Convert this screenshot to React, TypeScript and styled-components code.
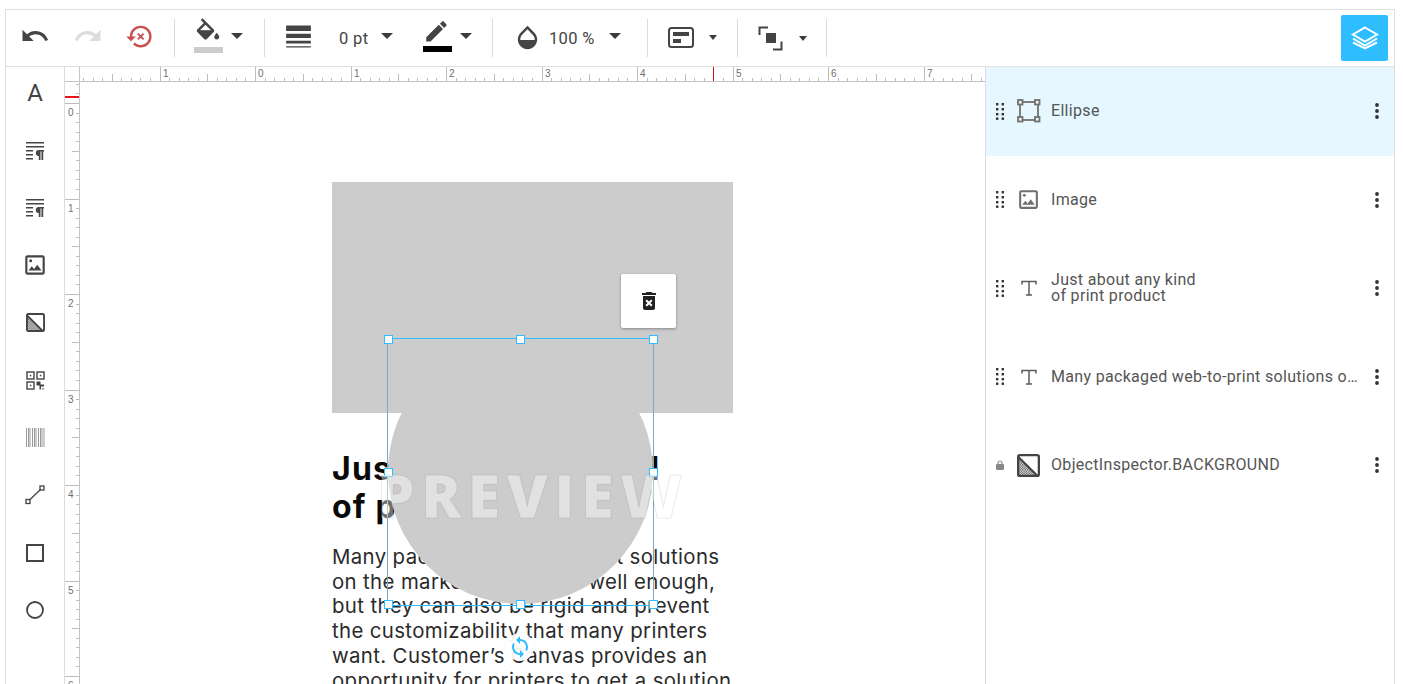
import React from 'react';
import styled, { createGlobalStyle } from 'styled-components';

const GlobalStyle = createGlobalStyle`
  html, body {
    margin: 0;
    height: 100%;
    overflow: hidden;
    background: #fff;
    font-family: Roboto, "Liberation Sans", sans-serif;
  }
`;

const Frame = styled.div`
  box-sizing: border-box;
  height: calc(100vh - 9px);
  margin: 9px 8px 0 5px;
  border: 1px solid #e0e0e0;
  border-bottom: 0;
  overflow: hidden;
  display: flex;
  flex-direction: column;
`;

const Toolbar = styled.div`
  flex: none;
  height: 56px;
  border-bottom: 1px solid #e0e0e0;
  display: flex;
  align-items: center;
`;

const Group = styled.div<{ $w: number; $pad?: number }>`
  box-sizing: border-box;
  width: ${(p) => p.$w}px;
  height: 38px;
  padding-left: ${(p) => p.$pad ?? 0}px;
  border-right: 1px solid #dcdcdc;
  display: flex;
  align-items: center;
`;

const Slot = styled.button<{ $w: number; $lift?: number; $left?: number }>`
  flex: none;
  width: ${(p) => p.$w}px;
  height: 38px;
  margin: 0 0 0 ${(p) => p.$left ?? 0}px;
  padding: 0 0 ${(p) => p.$lift ?? 0}px;
  border: 0;
  background: none;
  display: flex;
  flex-direction: column;
  align-items: center;
  justify-content: center;
`;

const Swatch = styled.span<{ $color: string }>`
  flex: none;
  width: 29px;
  height: 6px;
  margin-top: 1px;
  background: ${(p) => p.$color};
`;

const Caret = styled.span<{ $small?: boolean }>`
  width: 0;
  height: 0;
  border-left: ${(p) => (p.$small ? 4.5 : 6)}px solid transparent;
  border-right: ${(p) => (p.$small ? 4.5 : 6)}px solid transparent;
  border-top: ${(p) => (p.$small ? 5 : 6)}px solid #3c3c3c;
`;

const Value = styled.span<{ $w: number; $left: number }>`
  flex: none;
  width: ${(p) => p.$w}px;
  margin-left: ${(p) => p.$left}px;
  color: #444;
  font-size: 16.5px;
  letter-spacing: 0.35px;
  white-space: nowrap;
`;

const LayersButton = styled.button`
  flex: none;
  width: 47px;
  height: 46px;
  margin: 0 6px 0 auto;
  padding: 0;
  border: 0;
  border-radius: 2px;
  background: #2ebdff;
  display: flex;
  align-items: center;
  justify-content: center;
`;

const Workspace = styled.div`
  flex: 1;
  min-height: 0;
  display: grid;
  grid-template-columns: 59px 15px 1fr 409px;
`;

const Tools = styled.div`
  border-right: 1px solid #dcdcdc;
  display: flex;
  flex-direction: column;
  gap: 5.45px;
`;

const Tool = styled.button`
  flex: none;
  height: 52px;
  margin: 0;
  padding: 0;
  border: 0;
  background: none;
  display: flex;
  align-items: center;
  justify-content: center;
  color: #444;
  font-family: Roboto, sans-serif;
  font-size: 24px;
  font-weight: 400;
`;

const RulerColumn = styled.div`
  display: grid;
  grid-template-rows: 15px 1fr;
  min-height: 0;
`;

const Corner = styled.div`
  border-right: 1px solid #c4c4c4;
  border-bottom: 1px solid #c4c4c4;
`;

const VerticalRulerBox = styled.div`
  border-right: 1px solid #c4c4c4;
  overflow: hidden;
  position: relative;
`;

const CanvasColumn = styled.div`
  display: grid;
  grid-template-rows: 15px 1fr;
  min-width: 0;
  min-height: 0;
`;

const HorizontalRulerBox = styled.div`
  border-bottom: 1px solid #c4c4c4;
  overflow: hidden;
`;

const RulerSvg = styled.svg`
  display: block;
  shape-rendering: crispEdges;
`;

const Canvas = styled.div`
  position: relative;
  overflow: hidden;
  background: #fff;
`;

const Placeholder = styled.div`
  position: absolute;
  left: 252px;
  top: 100px;
  width: 401px;
  height: 231px;
  background: #ccc;
`;

const TextBlock = styled.div`
  position: absolute;
  left: 252px;
  top: 368px;
  white-space: pre;
  font-family: Inter, "Open Sans", sans-serif;
`;

const Title = styled.div`
  color: #0a0a0a;
  font-size: 32px;
  font-weight: 700;
  line-height: 38px;
  letter-spacing: 1.2px;
`;

const Body = styled.div`
  margin-top: 19px;
  color: #2b2b2b;
  font-size: 20.4px;
  font-weight: 400;
  line-height: 24.7px;
  letter-spacing: 0.36px;
`;

const Selection = styled.div`
  position: absolute;
  left: 307px;
  top: 256px;
  box-sizing: border-box;
  width: 267px;
  height: 268px;
  border: 1px solid #2ebdff;
  border-left-color: #7fa9bd;
  border-right-color: #7fa9bd;
`;

const Ellipse = styled.div`
  width: 265px;
  height: 265px;
  border-radius: 50%;
  background: #ccc;
`;

const Handle = styled.span<{ $x: number; $y: number }>`
  position: absolute;
  left: ${(p) => p.$x - 4}px;
  top: ${(p) => p.$y - 4}px;
  box-sizing: border-box;
  width: 9px;
  height: 9px;
  border: 1px solid #2ebdff;
  background: #fff;
`;

const Watermark = styled.div`
  position: absolute;
  left: 297px;
  top: 378px;
  color: rgba(255, 255, 255, 0.42);
  font-family: "Open Sans", sans-serif;
  font-size: 60px;
  font-weight: 800;
  line-height: 70px;
  letter-spacing: 6px;
  -webkit-text-stroke: 1px rgba(0, 0, 0, 0.09);
  white-space: nowrap;
`;

const DeleteButton = styled.button`
  position: absolute;
  left: 541px;
  top: 192px;
  width: 55px;
  height: 54px;
  padding: 0;
  border: 0;
  border-radius: 2px;
  background: #fff;
  box-shadow: 0 1px 3px rgba(0, 0, 0, 0.35);
  display: flex;
  align-items: center;
  justify-content: center;
`;

const RotateHandle = styled.div`
  position: absolute;
  left: 426px;
  top: 551px;
  width: 28px;
  height: 28px;
  border-radius: 50%;
  background: rgba(255, 255, 255, 0.92);
  box-shadow: 0 0 3px rgba(0, 0, 0, 0.08);
  display: flex;
  align-items: center;
  justify-content: center;
`;

const Inspector = styled.div`
  border-left: 1px solid #dcdcdc;
  display: flex;
  flex-direction: column;
`;

const LayerRow = styled.div<{ $active?: boolean }>`
  flex: none;
  height: 88.5px;
  box-sizing: border-box;
  background: ${(p) => (p.$active ? '#e6f7ff' : '#fff')};
  display: flex;
  align-items: center;
`;

const DragCell = styled.span`
  flex: none;
  width: 27px;
  display: flex;
  justify-content: center;
`;

const IconCell = styled.span`
  flex: none;
  width: 31px;
  margin-right: 7px;
  display: flex;
  justify-content: center;
`;

const LayerName = styled.span`
  flex: none;
  width: 308px;
  margin-right: 2px;
  color: #555;
  font-size: 16px;
  line-height: 16px;
  letter-spacing: 0.32px;
  white-space: pre;
  overflow: hidden;
  text-overflow: ellipsis;
`;

const MoreCell = styled.span`
  flex: none;
  width: 24px;
  margin-left: 4px;
  display: flex;
  justify-content: center;
`;

const STEP = 9.55;

const Ruler = ({ vertical, length, origin, marker }: { vertical?: boolean; length: number; origin: number; marker?: number }) => {
  const ticks: React.ReactNode[] = [];
  const labels: React.ReactNode[] = [];
  for (let i = -40; i * STEP + origin < length; i++) {
    const pos = Math.round(i * STEP + origin);
    if (pos < 0) continue;
    const major = i % 10 === 0;
    const size = major ? 14 : i % 5 === 0 ? 7 : 3;
    ticks.push(
      vertical ? (
        <line key={i} x1={14 - size} x2={14} y1={pos} y2={pos} stroke="#bdbdbd" />
      ) : (
        <line key={i} x1={pos} x2={pos} y1={14 - size} y2={14} stroke="#bdbdbd" />
      ),
    );
    if (major) {
      const text = String(Math.abs(i / 10));
      labels.push(
        <text
          key={i}
          x={vertical ? 3 : pos + 3}
          y={vertical ? pos + 13 : 10}
          fill="#707070"
          fontSize="10"
          fontFamily="Liberation Sans, sans-serif"
          style={{ shapeRendering: 'auto' }}
        >
          {text}
        </text>,
      );
    }
  }
  return (
    <RulerSvg width={vertical ? 14 : length} height={vertical ? length : 14}>
      {ticks}
      {labels}
      {marker !== undefined &&
        (vertical ? (
          <rect x={0} y={marker} width={14} height={2} fill="#e8141c" />
        ) : (
          <rect x={marker} y={0} width={1} height={14} fill="#d0101c" />
        ))}
    </RulerSvg>
  );
};

const Icon = ({ size = 24, box = '0 0 24 24', color = '#444', d }: { size?: number; box?: string; color?: string; d: string }) => (
  <svg width={size} height={size} viewBox={box} fill={color}>
    <path d={d} />
  </svg>
);

const UNDO = 'M12.5 8c-2.65 0-5.05.99-6.9 2.6L2 7v9h9l-3.62-3.62c1.39-1.16 3.16-1.88 5.12-1.88 3.54 0 6.55 2.31 7.6 5.5l2.37-.78C21.08 11.03 17.15 8 12.5 8z';
const REDO = 'M18.4 10.6C16.55 8.99 14.15 8 11.5 8c-4.65 0-8.58 3.03-9.96 7.22L3.9 16c1.05-3.19 4.05-5.5 7.6-5.5 1.95 0 3.73.72 5.12 1.88L13 16h9V7l-3.6 3.6z';
const RESTORE = 'M13 3a9 9 0 0 0-9 9H1l3.89 3.89.07.14L9 12H6c0-3.87 3.13-7 7-7s7 3.13 7 7-3.13 7-7 7c-1.93 0-3.68-.79-4.94-2.06l-1.42 1.42A8.954 8.954 0 0 0 13 21a9 9 0 0 0 0-18z';
const LINE_WEIGHT = 'M3 17h18v-2H3v2zm0 3h18v-1H3v1zm0-7h18v-3H3v3zm0-9v4h18V4H3z';
const OPACITY = 'M17.66 8L12 2.35 6.34 8C4.78 9.56 4 11.64 4 13.64s.78 4.11 2.34 5.67 3.61 2.35 5.66 2.35 4.1-.79 5.66-2.35S20 15.64 20 13.64 19.22 9.56 17.66 8zM6 14c.01-2 .62-3.27 1.76-4.4L12 5.27l4.24 4.38C17.38 10.77 17.99 12 18 14H6z';
const PENCIL = 'M3 17.25V21h3.75L17.81 9.94l-3.75-3.75L3 17.25zM20.71 7.04c.39-.39.39-1.02 0-1.41l-2.34-2.34c-.39-.39-1.02-.39-1.41 0l-1.83 1.83 3.75 3.75 1.83-1.83z';
const TRASH = 'M6 19c0 1.1.9 2 2 2h8c1.1 0 2-.9 2-2V7H6v12zm2.46-7.12l1.41-1.41L12 12.59l2.12-2.12 1.41 1.41L13.41 14l2.12 2.12-1.41 1.41L12 15.41l-2.12 2.12-1.41-1.41L10.59 14l-2.13-2.12zM15.5 4l-1-1h-5l-1 1H5v2h14V4z';
const SYNC = 'M12 4V1L8 5l4 4V6c3.31 0 6 2.69 6 6 0 1.01-.25 1.97-.7 2.8l1.46 1.46C19.54 15.03 20 13.57 20 12c0-4.42-3.58-8-8-8zm0 14c-3.31 0-6-2.69-6-6 0-1.01.25-1.97.7-2.8L5.24 7.74C4.46 8.97 4 10.43 4 12c0 4.42 3.58 8 8 8v3l4-4-4-4v3z';
const IMAGE = 'M19 5v14H5V5h14m0-2H5c-1.1 0-2 .9-2 2v14c0 1.1.9 2 2 2h14c1.1 0 2-.9 2-2V5c0-1.1-.9-2-2-2zm-4.86 8.86l-3 3.87L9 13.14 6 17h12l-3.86-5.14z';

const RestoreIcon = () => (
  <svg width="29" height="29" viewBox="0 0 24 24" fill="#c94f4f">
    <path d={RESTORE} />
    <path d="M10.6 9.6l4.8 4.8M15.4 9.6l-4.8 4.8" stroke="#c94f4f" strokeWidth="1.5" fill="none" />
  </svg>
);

const FillIcon = () => (
  <svg width="30" height="28" viewBox="0 0 24 22" fill="#444" style={{ flex: 'none' }}>
    <path d="M16.56 8.94L7.62 0 6.21 1.41l2.38 2.38-5.15 5.15c-.59.59-.59 1.54 0 2.12l5.5 5.5c.29.29.68.44 1.06.44s.77-.15 1.06-.44l5.5-5.5c.59-.58.59-1.53 0-2.12zM5.21 10L10 5.21 14.79 10H5.21z" />
    <path d="M4.5 9.5h11v1.5l-5.5 5.5L4.5 11z" />
    <path d="M19 11.5s-2 2.17-2 3.5c0 1.1.9 2 2 2s2-.9 2-2c0-1.33-2-3.5-2-3.5z" />
  </svg>
);

const TextBoxIcon = () => (
  <svg width="26" height="21" viewBox="0 0 26 21">
    <rect x="1" y="1" width="24" height="19" rx="2.5" fill="none" stroke="#444" strokeWidth="2" />
    <rect x="5" y="5" width="16" height="4" fill="#444" />
    <rect x="5" y="12" width="8" height="4" fill="#444" />
  </svg>
);

const ArrangeIcon = () => (
  <svg width="25" height="25" viewBox="0 0 25 25">
    <path d="M1.5 9V1.5H10M23.5 15.5V23.5H15" fill="none" stroke="#444" strokeWidth="2" />
    <rect x="8" y="7" width="10" height="10" fill="#444" />
  </svg>
);

const LayersIcon = () => (
  <svg width="28" height="24" viewBox="0 0 28 24" fill="none" stroke="#fff" strokeWidth="2">
    <path d="M14 1.5L26 8.5L14 15.5L2 8.5Z" />
    <path d="M2 12.5L14 19.5L26 12.5" />
    <path d="M2 16.5L14 22.5L26 16.5" />
  </svg>
);

const ParagraphIcon = () => (
  <svg width="19" height="19" viewBox="0 0 19 19" fill="#444">
    <rect x="0" y="1" width="18" height="1.5" />
    <rect x="0" y="5" width="18" height="1.5" />
    <rect x="0" y="9" width="7" height="1.5" />
    <rect x="0" y="13" width="7" height="1.5" />
    <rect x="0" y="17" width="7" height="1.5" />
    <path d="M18 9v1.5h-.8V19h-1.700V10.500h-1V19h-1.700V15a3 3 0 0 1 0-6z" />
  </svg>
);

const BackgroundIcon = ({ id, size }: { id: string; size: number }) => (
  <svg width={size} height={size} viewBox="0 0 20 20">
    <defs>
      <pattern id={id} width="2.2" height="2.2" patternUnits="userSpaceOnUse">
        <rect width="1.1" height="1.1" fill="#444" />
        <rect x="1.1" y="1.1" width="1.1" height="1.1" fill="#444" />
      </pattern>
    </defs>
    <rect x="1" y="1" width="18" height="18" rx="1.5" fill="#fff" stroke="#444" strokeWidth="2" />
    <path d="M1 1L19 19H16L1 4Z" fill="#444" />
    <path d="M1 4L16 19H1Z" fill={`url(#${id})`} />
  </svg>
);

const QrIcon = () => (
  <svg width="19" height="19" viewBox="0 0 19 19" fill="none" stroke="#444" strokeWidth="1.4">
    <rect x="1" y="1" width="7" height="7" />
    <rect x="11" y="1" width="7" height="7" />
    <rect x="1" y="11" width="7" height="7" />
    <rect x="3.800" y="3.800" width="1.500" height="1.500" fill="#444" stroke="none" />
    <rect x="13.800" y="3.800" width="1.500" height="1.500" fill="#444" stroke="none" />
    <rect x="3.800" y="13.800" width="1.500" height="1.500" fill="#444" stroke="none" />
    <path d="M10.500 10.500h4v3h3.500v2h-3v3h-1.500v-4h-3z" fill="#444" stroke="none" />
    <rect x="16" y="17" width="2" height="1.500" fill="#888" stroke="none" />
  </svg>
);

const BarcodeIcon = () => (
  <svg width="19" height="19" viewBox="0 0 19 19" fill="#999">
    {[0, 2, 3.5, 6, 8, 9.5, 12, 14, 15.5, 17.5].map((x) => (
      <rect key={x} x={x} width="1" height="19" />
    ))}
  </svg>
);

const LineIcon = () => (
  <svg width="20" height="20" viewBox="0 0 20 20" fill="none" stroke="#444" strokeWidth="1.300">
    <rect x="1" y="14.500" width="4" height="4" />
    <rect x="15" y="1" width="4" height="4" />
    <path d="M4.500 15L15.500 4.500" />
  </svg>
);

const RectIcon = () => (
  <svg width="18" height="18" viewBox="0 0 18 18" fill="none" stroke="#444" strokeWidth="2">
    <rect x="1" y="1" width="16" height="16" />
  </svg>
);

const CircleIcon = () => (
  <svg width="18" height="18" viewBox="0 0 18 18" fill="none" stroke="#444" strokeWidth="1.800">
    <circle cx="9" cy="9" r="8" />
  </svg>
);

const DragDots = () => (
  <svg width="8" height="17" viewBox="0 0 8 17" fill="#333">
    {[0, 5, 10, 14.5].flatMap((y) =>
      [0, 5.6].map((x) => <rect key={`${x}-${y}`} x={x} y={y} width="2.4" height="2.4" />),
    )}
  </svg>
);

const MoreDots = () => (
  <svg width="4" height="16" viewBox="0 0 4 16" fill="#333">
    <circle cx="2" cy="2" r="1.900" />
    <circle cx="2" cy="8" r="1.900" />
    <circle cx="2" cy="14" r="1.900" />
  </svg>
);

const LockIcon = () => (
  <svg width="10" height="10" viewBox="0 0 10 10" fill="#888">
    <rect x="1" y="4" width="8" height="6" rx="1" />
    <path d="M3 4.500V3a2 2 0 0 1 4 0v1.500" fill="none" stroke="#888" strokeWidth="1.200" />
  </svg>
);

const EllipseLayerIcon = () => (
  <svg width="24" height="24" viewBox="0 0 24 24" fill="none" stroke="#707070" strokeWidth="1.800">
    <rect x="3" y="3" width="18" height="18" />
    {[
      [1, 1],
      [18, 1],
      [1, 18],
      [18, 18],
    ].map(([x, y]) => (
      <rect key={`${x}-${y}`} x={x} y={y} width="4.500" height="4.500" fill="#f1f1f1" />
    ))}
  </svg>
);

const TextLayerIcon = () => (
  <svg width="18" height="18" viewBox="0 0 18 18" fill="none" stroke="#5c5c5c" strokeWidth="1.500">
    <path d="M2 5.500V2.500H16V5.500" />
    <path d="M9 2.500V16M6 16H12" />
  </svg>
);

const ImageLayerIcon = () => (
  <svg width="25" height="25" viewBox="0 0 24 24" fill="#707070">
    <path d={IMAGE} />
    <circle cx="8" cy="8" r="1.400" />
  </svg>
);

type Layer = { name: string; icon: React.ReactNode; active?: boolean; locked?: boolean };

const layers: Layer[] = [
  { name: 'Ellipse', icon: <EllipseLayerIcon />, active: true },
  { name: 'Image', icon: <ImageLayerIcon /> },
  { name: 'Just about any kind\nof print product', icon: <TextLayerIcon /> },
  { name: 'Many packaged web-to-print solutions on the market', icon: <TextLayerIcon /> },
  { name: 'ObjectInspector.BACKGROUND', icon: <BackgroundIcon id="layer-bg" size={23} />, locked: true },
];

const handles = [
  [0, 0],
  [132, 0],
  [265, 0],
  [0, 133],
  [265, 133],
  [0, 265],
  [132, 265],
  [265, 265],
];

export default function App() {
  return (
    <>
      <GlobalStyle />
      <Frame>
        <Toolbar>
          <Group $w={169} $pad={4}>
            <Slot $w={50} $lift={4}>
              <Icon size={30} d={UNDO} />
            </Slot>
            <Slot $w={56} $lift={4}>
              <Icon size={30} color="#dcdcdc" d={REDO} />
            </Slot>
            <Slot $w={46} $lift={4}>
              <RestoreIcon />
            </Slot>
          </Group>
          <Group $w={90} $pad={15}>
            <Slot $w={36} $lift={5}>
              <FillIcon />
              <Swatch $color="#cccccc" />
            </Slot>
            <Slot $w={22} $lift={4}>
              <Caret />
            </Slot>
          </Group>
          <Group $w={228} $pad={15}>
            <Slot $w={36} $lift={3}>
              <Icon size={33} d={LINE_WEIGHT} />
            </Slot>
            <Value $w={30} $left={23}>
              0 pt
            </Value>
            <Slot $w={36} $lift={4}>
              <Caret />
            </Slot>
            <Slot $w={36} $lift={5} $left={14}>
              <Icon size={28} box="1 1 23 23" d={PENCIL} />
              <Swatch $color="#000" />
            </Slot>
            <Slot $w={22} $lift={4}>
              <Caret />
            </Slot>
          </Group>
          <Group $w={155} $pad={16}>
            <Slot $w={36} $lift={2}>
              <Icon size={29} d={OPACITY} />
            </Slot>
            <Value $w={46} $left={4}>
              100 %
            </Value>
            <Slot $w={40} $lift={4}>
              <Caret />
            </Slot>
          </Group>
          <Group $w={90} $pad={15}>
            <Slot $w={36} $lift={2}>
              <TextBoxIcon />
            </Slot>
            <Slot $w={28} $lift={2}>
              <Caret $small />
            </Slot>
          </Group>
          <Group $w={89} $pad={14}>
            <Slot $w={36}>
              <ArrangeIcon />
            </Slot>
            <Slot $w={30}>
              <Caret $small />
            </Slot>
          </Group>
          <LayersButton>
            <LayersIcon />
          </LayersButton>
        </Toolbar>
        <Workspace>
          <Tools>
            <Tool>A</Tool>
            <Tool>
              <ParagraphIcon />
            </Tool>
            <Tool>
              <ParagraphIcon />
            </Tool>
            <Tool>
              <Icon size={26} d={IMAGE + 'M8 6.600a1.400 1.400 0 1 0 0 2.800 1.400 1.400 0 0 0 0-2.800z'} />
            </Tool>
            <Tool>
              <BackgroundIcon id="tool-bg" size={19} />
            </Tool>
            <Tool>
              <QrIcon />
            </Tool>
            <Tool>
              <BarcodeIcon />
            </Tool>
            <Tool>
              <LineIcon />
            </Tool>
            <Tool>
              <RectIcon />
            </Tool>
            <Tool>
              <CircleIcon />
            </Tool>
          </Tools>
          <RulerColumn>
            <Corner />
            <VerticalRulerBox>
              <Ruler vertical length={602} origin={21} marker={14} />
            </VerticalRulerBox>
          </RulerColumn>
          <CanvasColumn>
            <HorizontalRulerBox>
              <Ruler length={905} origin={175} marker={633} />
            </HorizontalRulerBox>
            <Canvas>
              <Placeholder />
              <TextBlock>
                <Title>{'Just about any kind\nof print product'}</Title>
                <Body>
                  {
                    'Many packaged web-to-print solutions\non the market often work well enough,\nbut they can also be rigid and prevent\nthe customizability that many printers\nwant. Customer’s Canvas provides an\nopportunity for printers to get a solution'
                  }
                </Body>
              </TextBlock>
              <Selection>
                <Ellipse />
                {handles.map(([x, y]) => (
                  <Handle key={`${x}-${y}`} $x={x} $y={y} />
                ))}
              </Selection>
              <Watermark>PREVIEW</Watermark>
              <DeleteButton>
                <Icon size={24} color="#222" d={TRASH} />
              </DeleteButton>
              <RotateHandle>
                <Icon size={24} color="#2ebdff" d={SYNC} />
              </RotateHandle>
            </Canvas>
          </CanvasColumn>
          <Inspector>
            {layers.map((layer) => (
              <LayerRow key={layer.name} $active={layer.active}>
                <DragCell>{layer.locked ? <LockIcon /> : <DragDots />}</DragCell>
                <IconCell>{layer.icon}</IconCell>
                <LayerName>{layer.name}</LayerName>
                <MoreCell>
                  <MoreDots />
                </MoreCell>
              </LayerRow>
            ))}
          </Inspector>
        </Workspace>
      </Frame>
    </>
  );
}
